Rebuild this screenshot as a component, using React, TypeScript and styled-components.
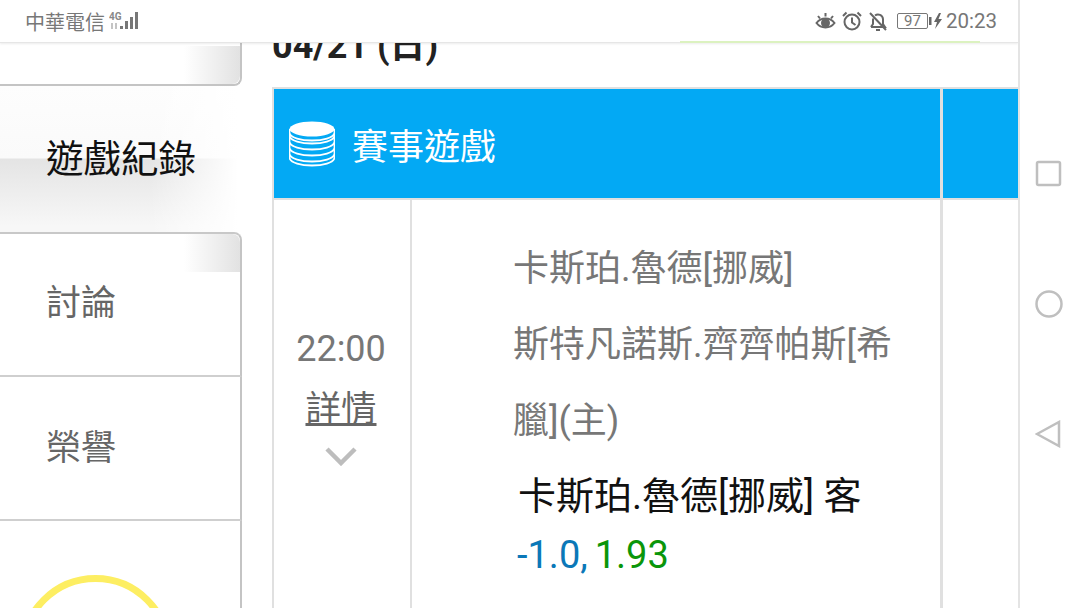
import { createGlobalStyle, styled } from "styled-components";

const GlobalStyle = createGlobalStyle`
  html, body {
    margin: 0;
    padding: 0;
    width: 1080px;
    height: 608px;
    overflow: hidden;
    background: #fff;
    font-family: Roboto, "Noto Sans CJK TC", sans-serif;
  }
`;

const Screen = styled.div`
  display: flex;
  width: 1080px;
  height: 608px;
  overflow: hidden;
  background: #fff;
`;

const Phone = styled.div`
  position: relative;
  flex: 0 0 1020px;
  height: 608px;
  overflow: hidden;
  box-sizing: border-box;
  border-right: 2px solid #e4e4e4;
`;

// 상단 상태바
const StatusBar = styled.div`
  position: absolute;
  top: 0;
  left: 0;
  right: 0;
  z-index: 2;
  height: 43px;
  box-sizing: border-box;
  padding: 0 21px 0 25px;
  display: flex;
  align-items: center;
  justify-content: space-between;
  background: #fff;
  border-bottom: 1px solid #e6e6e6;
  box-shadow: 0 1px 2px rgba(0, 0, 0, 0.08);
  color: #777;
`;

const StatusLeft = styled.div`
  display: flex;
  align-items: center;
  gap: 4px;
  font-size: 20px;
`;

const StatusRight = styled.div`
  display: flex;
  align-items: center;
  gap: 6px;
  font-size: 20.5px;
`;

const Battery = styled.div`
  width: 31px;
  height: 16px;
  box-sizing: border-box;
  margin-left: 3px;
  border: 1px solid #777;
  border-radius: 2px;
  font-size: 15px;
  line-height: 14px;
  text-align: center;
`;

const ChargeIcon = styled.svg`
  display: block;
  margin: 0 -3px 0 -5px;
`;

const LoadLine = styled.div`
  position: absolute;
  left: 680px;
  bottom: -1px;
  width: 300px;
  height: 2px;
  background: #dcf2c0;
`;

const Body = styled.div`
  display: flex;
  height: 608px;
`;

const Side = styled.div`
  flex: 0 0 242px;
  display: flex;
  flex-direction: column;
`;

// 탭 한 칸
const Tab = styled.div<{ $h: number; $lift?: number; $gloss?: boolean; $last?: boolean }>`
  position: relative;
  flex: 0 0 ${({ $h }) => $h}px;
  box-sizing: border-box;
  padding: 0 0 ${({ $lift }) => $lift ?? 0}px 46px;
  display: flex;
  align-items: center;
  font-size: 35px;
  color: #666;
  background: #fff;
  border-right: 2px solid #c4c4c4;
  border-bottom: ${({ $last }) => ($last ? "none" : "2px solid #cfcfcf")};
  border-top: ${({ $gloss }) => ($gloss ? "2px solid #c8c8c8" : "none")};
  border-radius: ${({ $gloss }) => ($gloss ? "0 8px 0 0" : "0")};
  overflow: ${({ $last }) => ($last ? "hidden" : "visible")};
`;

const TopStub = styled(Tab)`
  border-radius: 0 0 8px 0;
  border-bottom: 2px solid #c4c4c4;
`;

const ActiveTab = styled.div`
  flex: 0 0 146px;
  box-sizing: border-box;
  padding: 0 0 7px 46px;
  display: flex;
  align-items: center;
  font-size: 37.5px;
  color: #111;
  background:
    linear-gradient(90deg, rgba(255, 255, 255, 0) 150px, #fff 238px),
    linear-gradient(180deg, #fdfdfd 0, #fafafa 72px, #e4e4e4 73px, #f7f7f7 140px);
`;

const Gloss = styled.div<{ $bottom?: boolean }>`
  position: absolute;
  ${({ $bottom }) => ($bottom ? "bottom: 0;" : "top: 0;")}
  right: 0;
  width: 56px;
  height: 38px;
  background: linear-gradient(90deg, #fff, #e2e2e2);
  border-radius: inherit;
`;

const Ring = styled.div`
  position: absolute;
  left: 19px;
  top: 54px;
  width: 153px;
  height: 153px;
  box-sizing: border-box;
  border: 7px solid #fdee62;
  border-radius: 50%;
`;

const Main = styled.div`
  flex: 1;
  padding: 0 0 0 30px;
  display: flex;
  flex-direction: column;
`;

const DateTitle = styled.div`
  height: 87px;
  box-sizing: border-box;
  padding-top: 26px;
  font-size: 36px;
  line-height: 40px;
  font-weight: 700;
  color: #222;
`;

const Table = styled.div`
  display: grid;
  grid-template-columns: 138px 531px 75px;
  grid-template-rows: 111px 1fr;
  width: 746px;
  flex: 1;
  border-left: 2px solid #e0e0e0;
  border-top: 2px solid #e0e0e0;
`;

const HeadCell = styled.div<{ $rest?: boolean }>`
  grid-column: ${({ $rest }) => ($rest ? "auto" : "span 2")};
  display: flex;
  align-items: center;
  gap: 17px;
  padding-left: 15px;
  background: #03a9f4;
  border-right: ${({ $rest }) => ($rest ? "none" : "3px solid #e0e0e0")};
  border-bottom: 2px solid #e0e0e0;
  color: #fff;
  font-size: 36px;
`;

const TimeCell = styled.div`
  box-sizing: border-box;
  padding: 128px 2px 0 0;
  border-right: 2px solid #e0e0e0;
  display: flex;
  flex-direction: column;
  align-items: center;
  color: #777;
  font-size: 36px;
  line-height: 42px;
`;

const DetailLink = styled.div`
  margin: 18px 0 16px;
  font-size: 35.5px;
  text-decoration: underline;
  color: #666;
`;

const GameCell = styled.div`
  box-sizing: border-box;
  padding: 31px 30px 0 101px;
  border-right: 3px solid #e0e0e0;
`;

const Player = styled.div`
  color: #777;
  font-size: 36px;
  line-height: 76px;
`;

const Pick = styled.div`
  margin: 7px 0 0 5px;
  color: #111;
  font-size: 38px;
  line-height: 60px;
  white-space: nowrap;
`;

const Odds = styled.div`
  margin: 1px 0 0 4px;
  font-size: 38px;
  line-height: 56px;
  display: flex;
  gap: 7px;
`;

const OddsValue = styled.span<{ $color: string }>`
  color: ${({ $color }) => $color};
`;

const Nav = styled.div`
  flex: 1;
  display: flex;
  flex-direction: column;
  align-items: center;
  padding: 160px 2px 0 0;
  gap: 102px;
`;

const NavIcon = styled.svg`
  display: block;
  width: 28px;
  height: 28px;
  fill: none;
  stroke: #bfbfbf;
  stroke-width: 2.5;
`;

const StatusIcon = styled.svg`
  display: block;
  fill: none;
  stroke: #666;
  stroke-width: 2;
`;

const App = () => {
  return (
    <Screen>
      <GlobalStyle />
      <Phone>
        <StatusBar>
          <StatusLeft>
            中華電信
            <svg width="30" height="22" viewBox="0 0 30 22">
              <rect x="11" y="16" width="3" height="3" fill="#777" />
              <rect x="16" y="11" width="3" height="8" fill="#777" />
              <rect x="21" y="7" width="3" height="12" fill="#777" />
              <rect x="26" y="2" width="3" height="17" fill="#777" />
              <text x="0" y="10" fontSize="10" fill="#888" fontWeight="700">4G</text>
              <path d="M3 13v6M7 13v6" stroke="#c4c4c4" strokeWidth="2" />
            </svg>
          </StatusLeft>
          <StatusRight>
            <StatusIcon width="21" height="20" viewBox="0 0 21 20">
              <path d="M1.5 12 C6 6 15 6 19.5 12 C15 18 6 18 1.5 12 Z" />
              <circle cx="10.5" cy="12" r="3.5" fill="#666" />
              <path d="M3 5l2 2.5M10.5 2v3.5M18 5l-2 2.5" />
            </StatusIcon>
            <StatusIcon width="20" height="20" viewBox="0 0 20 20">
              <circle cx="10" cy="11" r="7.5" />
              <path d="M10 6.5v5l3.5 2.5M1 5l3.5-3.5M19 5l-3.5-3.5" />
            </StatusIcon>
            <StatusIcon width="20" height="20" viewBox="0 0 20 20">
              <path d="M3 16h14l-2-3V8a5 5 0 0 0-8-3.5M5 7.5V13l-2 3M8 19h4M2 2l16 17" />
            </StatusIcon>
            <Battery>97</Battery>
            <ChargeIcon width="14" height="18" viewBox="0 0 14 18">
              <rect x="0" y="5" width="2.5" height="8" fill="#666" />
              <path d="M10 1 L5 10 H8 L6 17 L13 7 H9.5 L12 1 Z" fill="#666" />
            </ChargeIcon>
            20:23
          </StatusRight>
          <LoadLine />
        </StatusBar>
        <Body>
          <Side>
            <TopStub $h={86}>
              <Gloss $bottom />
            </TopStub>
            <ActiveTab>遊戲紀錄</ActiveTab>
            <Tab $h={145} $gloss $lift={10}>
              <Gloss />
              討論
            </Tab>
            <Tab $h={144} $lift={7}>榮譽</Tab>
            <Tab $h={87} $last>
              <Ring />
            </Tab>
          </Side>
          <Main>
            <DateTitle>04/21 (日)</DateTitle>
            <Table>
              <HeadCell>
                <svg width="46" height="46" viewBox="0 0 46 46">
                  <ellipse cx="23" cy="8" rx="22.5" ry="7.5" fill="#fff" />
                  <path
                    d="M.5 8v4c2 10 43 10 45 0V8M.5 15c2 10 43 10 45 0M.5 21c2 10 43 10 45 0M.5 27c2 10 43 10 45 0M.5 33c2 10 43 10 45 0M.5 37c2 10 43 10 45 0M.5 12v25M45.5 12v25"
                    fill="none"
                    stroke="#fff"
                    strokeWidth="1.8"
                  />
                </svg>
                賽事遊戲
              </HeadCell>
              <HeadCell $rest />
              <TimeCell>
                22:00
                <DetailLink>詳情</DetailLink>
                <svg width="32" height="20" viewBox="0 0 32 20" fill="none" stroke="#bdbdbd" strokeWidth="4.5">
                  <path d="M2 3 L16 17 L30 3" />
                </svg>
              </TimeCell>
              <GameCell>
                <Player>卡斯珀.魯德[挪威]</Player>
                <Player>斯特凡諾斯.齊齊帕斯[希臘](主)</Player>
                <Pick>卡斯珀.魯德[挪威] 客</Pick>
                <Odds>
                  <OddsValue $color="#0b78b8">-1.0,</OddsValue>
                  <OddsValue $color="#0a960a">1.93</OddsValue>
                </Odds>
              </GameCell>
              <div />
            </Table>
          </Main>
        </Body>
      </Phone>
      <Nav>
        <NavIcon viewBox="0 0 28 28">
          <rect x="2" y="2" width="23" height="23" rx="1.5" />
        </NavIcon>
        <NavIcon viewBox="0 0 28 28">
          <circle cx="14" cy="14" r="12.5" />
        </NavIcon>
        <NavIcon viewBox="0 0 28 28">
          <path d="M2 14 L24 2 V26 Z" />
        </NavIcon>
      </Nav>
    </Screen>
  );
};

export default App;
